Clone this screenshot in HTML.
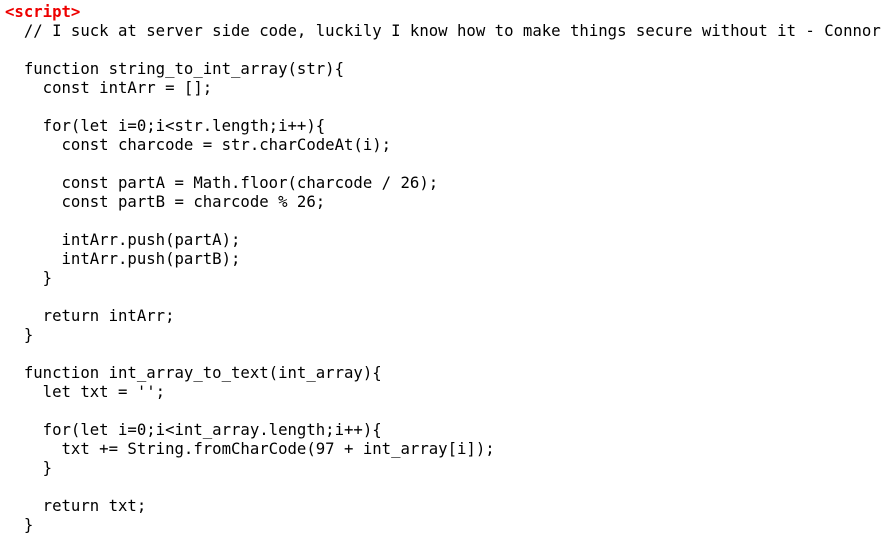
<!DOCTYPE html>
<html><head><meta charset="utf-8"><style>
html,body{margin:0;padding:0;background:#fff;width:886px;height:538px;overflow:hidden}
pre{margin:0;position:absolute;left:5px;top:2px;font-family:"DejaVu Sans Mono","Liberation Mono",monospace;font-size:15.65px;line-height:19px;color:#000;white-space:pre}
.t{color:#e00;font-weight:bold}
</style></head><body>
<pre><span class="t">&lt;script&gt;</span>
  // I suck at server side code, luckily I know how to make things secure without it - Connor

  function string_to_int_array(str){
    const intArr = [];

    for(let i=0;i&lt;str.length;i++){
      const charcode = str.charCodeAt(i);

      const partA = Math.floor(charcode / 26);
      const partB = charcode % 26;

      intArr.push(partA);
      intArr.push(partB);
    }

    return intArr;
  }

  function int_array_to_text(int_array){
    let txt = '';

    for(let i=0;i&lt;int_array.length;i++){
      txt += String.fromCharCode(97 + int_array[i]);
    }

    return txt;
  }
</pre>
</body></html>
